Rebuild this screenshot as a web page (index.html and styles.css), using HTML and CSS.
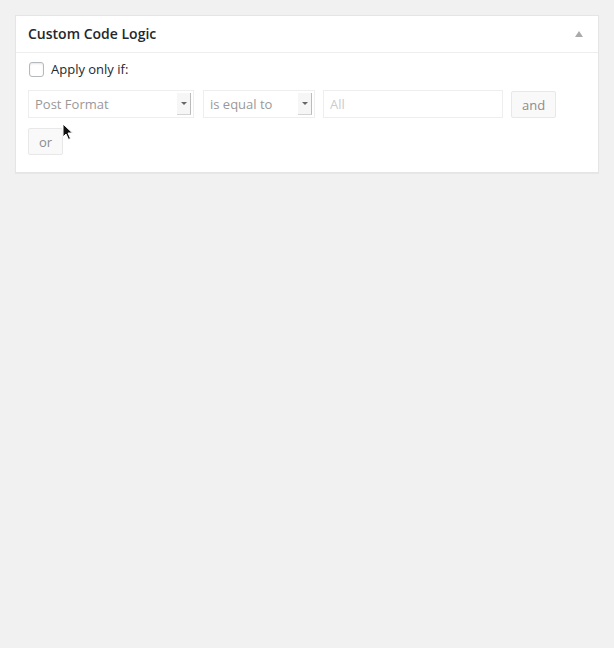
FILE: index.html
```html
<!DOCTYPE html>
<html lang="en">

<head>
    <meta charset="UTF-8">
    <meta name="viewport" content="width=device-width, initial-scale=1.0">
    <title>Custom Code Logic</title>
    <link rel="stylesheet" href="styles.css">
</head>

<body>
    <div class="postbox">
        <div class="postbox-header">
            <h2>Custom Code Logic</h2>
            <span class="toggle-arrow"></span>
        </div>
        <div class="inside">
            <label class="apply-row">
                <input type="checkbox" class="apply-check">
                <span>Apply only if:</span>
            </label>
            <div class="conditions">
                <div class="fake-select select-wide">
                    <span>Post Format</span>
                    <span class="select-arrow"></span>
                </div>
                <div class="fake-select select-narrow">
                    <span>is equal to</span>
                    <span class="select-arrow"></span>
                </div>
                <input type="text" class="value-input" placeholder="All" disabled>
                <button type="button" class="logic-btn">and</button>
                <button type="button" class="logic-btn">or</button>
            </div>
        </div>
    </div>

    <!-- mouse pointer from the capture -->
    <svg class="cursor" width="12" height="18" viewBox="0 0 12 18">
        <path d="M1 1 L1 14 L4 11 L6.5 16.5 L8.5 15.5 L6 10 L10.5 10 Z" fill="#111" stroke="#fff" stroke-width="1"/>
    </svg>
</body>

</html>
```

FILE: styles.css
```css
body {
    margin: 0;
    padding: 15px;
    background-color: #f1f1f1;
    font-family: "Open Sans", "Liberation Sans", sans-serif;
    color: #23282d;
    height: 648px;
    box-sizing: border-box;
    position: relative;
}

.postbox {
    width: 584px;
    box-sizing: border-box;
    background-color: #fff;
    border: 1px solid #e5e5e5;
    box-shadow: 0 1px 1px rgba(0, 0, 0, 0.04);
}

.postbox-header {
    display: flex;
    justify-content: space-between;
    align-items: center;
    height: 36px;
    padding: 0 12px;
    border-bottom: 1px solid #eee;
}

.postbox-header h2 {
    margin: 0;
    font-size: 14px;
    font-weight: 600;
    line-height: 1.4;
}

.toggle-arrow {
    width: 0;
    height: 0;
    margin-right: 3px;
    border-left: 4px solid transparent;
    border-right: 4px solid transparent;
    border-bottom: 6px solid #aaa;
}

.inside {
    padding: 8px 12px 17px;
}

.apply-row {
    display: flex;
    align-items: center;
    gap: 7px;
    font-size: 13px;
    line-height: 16px;
    margin-bottom: 13px;
}

.apply-check {
    appearance: none;
    width: 15px;
    height: 15px;
    margin: 0 0 0 1px;
    border: 1px solid #b4b9be;
    border-radius: 3px;
    background-color: #fff;
    box-shadow: inset 0 1px 2px rgba(0, 0, 0, 0.1);
}

.conditions {
    display: flex;
    flex-wrap: wrap;
    align-items: flex-start;
    column-gap: 8px;
    row-gap: 9px;
}

.fake-select {
    display: flex;
    align-items: center;
    justify-content: space-between;
    height: 28px;
    box-sizing: border-box;
    padding: 0 2px 0 6px;
    border: 1px solid #eee;
    font-size: 13px;
    color: #999;
}

.select-wide {
    width: 166px;
    margin-right: 1px;
}

.select-narrow {
    width: 112px;
}

.select-arrow {
    position: relative;
    width: 14px;
    height: 22px;
    box-sizing: border-box;
    background-color: #f6f6f6;
    border-right: 1px solid #bbb;
    border-bottom: 1px solid #d4d4d4;
}

.select-arrow::after {
    content: "";
    position: absolute;
    left: 4px;
    top: 9px;
    border-left: 3px solid transparent;
    border-right: 3px solid transparent;
    border-top: 3px solid #666;
}

.value-input {
    width: 180px;
    height: 28px;
    box-sizing: border-box;
    padding: 0 6px;
    border: 1px solid #eee;
    background-color: #fff;
    font-family: inherit;
    font-size: 13px;
}

.value-input::placeholder {
    color: #ccc;
}

.logic-btn {
    height: 27px;
    margin-top: 1px;
    padding: 0 10px;
    border: 1px solid #e8e8e8;
    border-radius: 2px;
    background-color: #f9f9f9;
    font-family: inherit;
    font-size: 13px;
    color: #8c8c8c;
}

.cursor {
    position: absolute;
    left: 62px;
    top: 123px;
}
```
